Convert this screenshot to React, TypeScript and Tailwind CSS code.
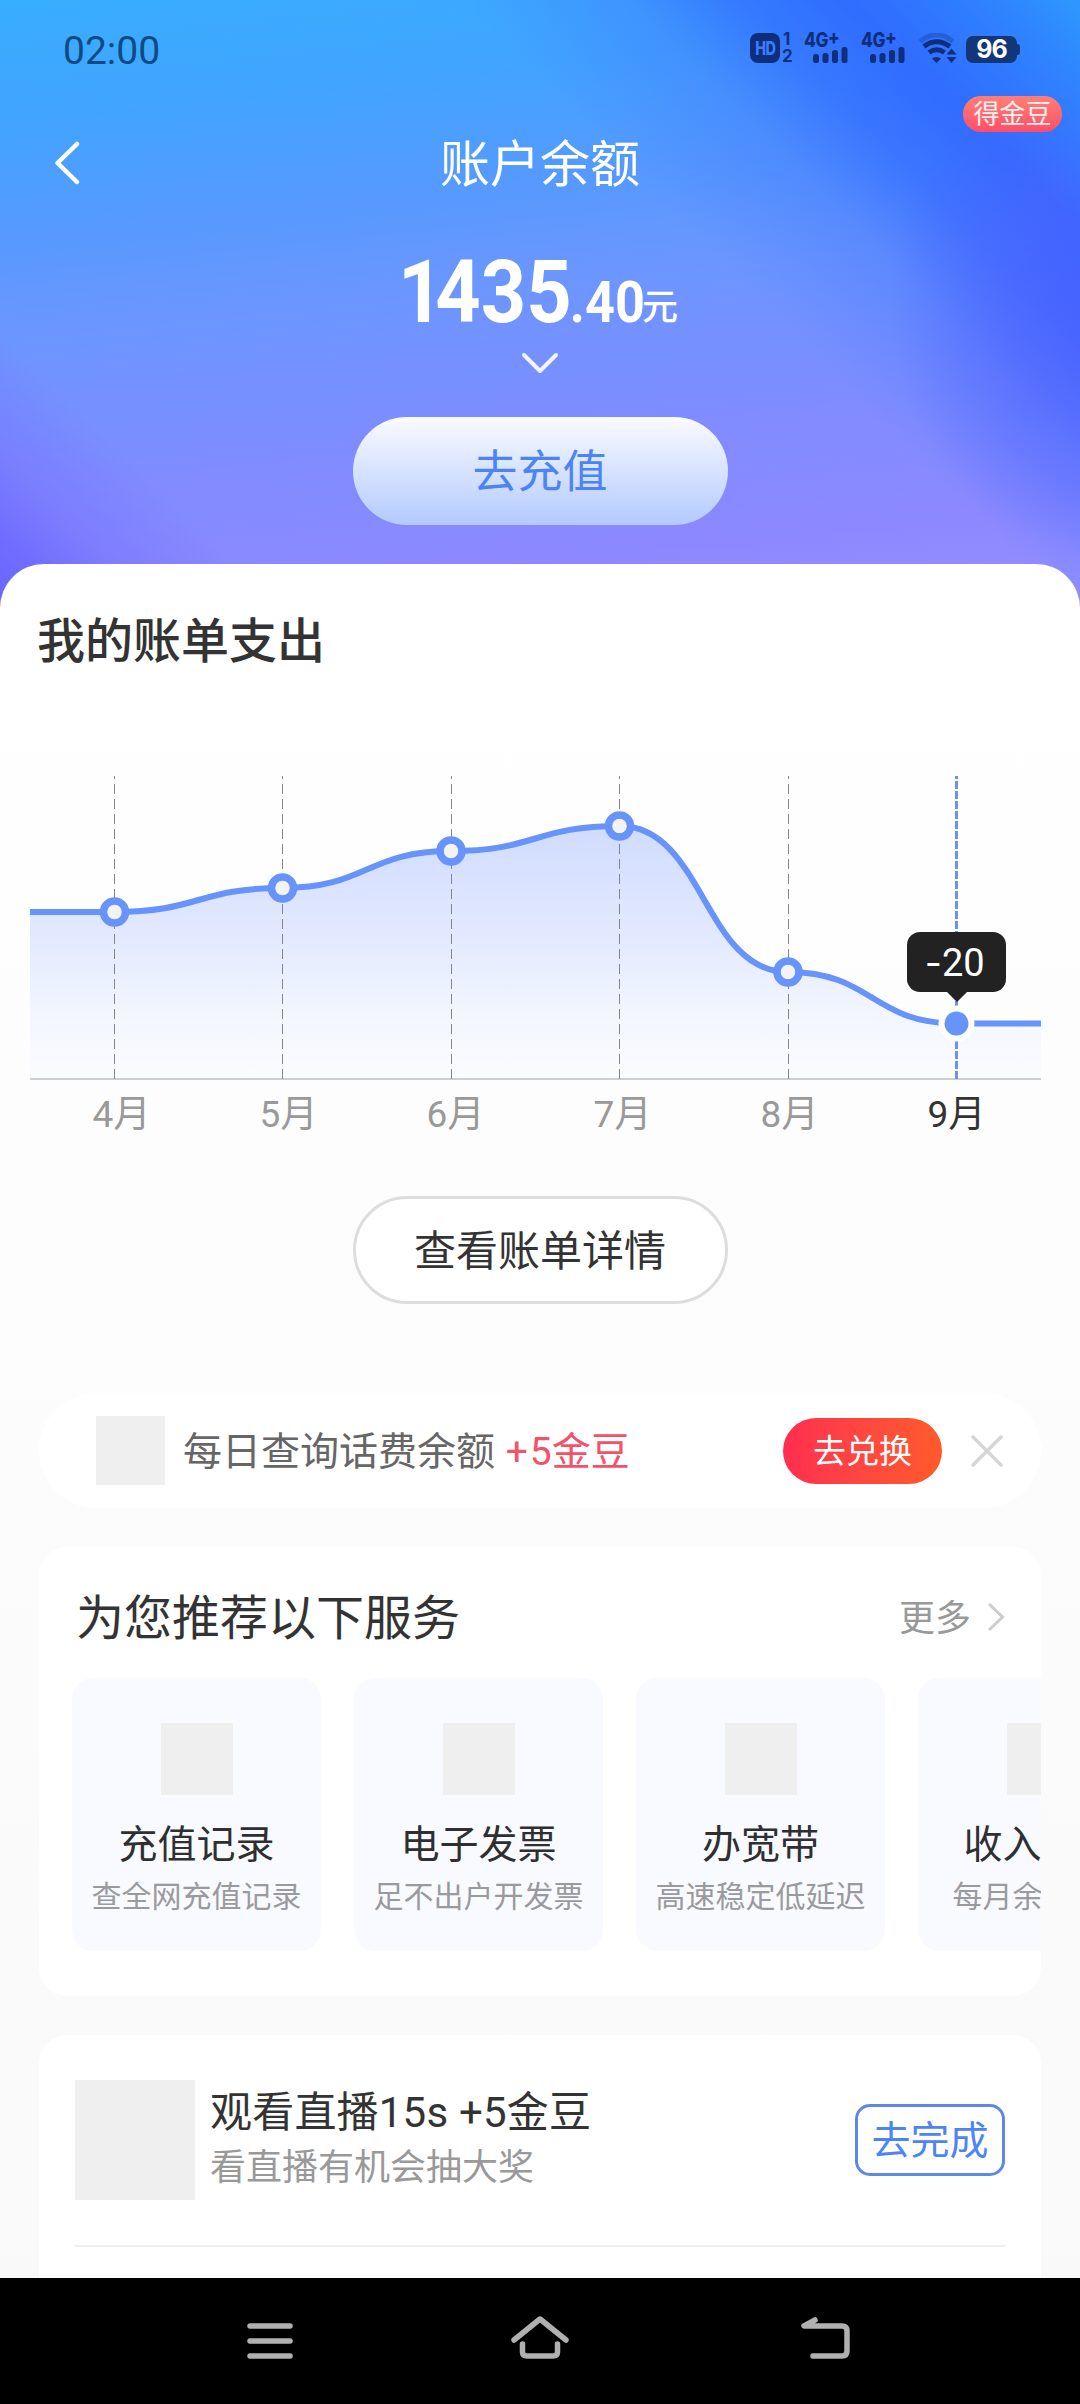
import React from 'react';

const FONT = "font-[Roboto,'Noto_Sans_CJK_SC',sans-serif]";

function Signal() {
  return (
    <div className="flex h-[30px] w-[45px] flex-col">
      <span className="h-[14px] origin-left scale-x-[0.86] font-[Inter,sans-serif] text-[20px] leading-[14px] font-extrabold tracking-[-0.5px]">
        4G<span className="relative -top-[3px]">+</span>
      </span>
      <svg width="45" height="16" viewBox="0 0 45 16" fill="currentColor">
        <rect x="9" y="7" width="6" height="9" rx="2.5" />
        <rect x="18.500" y="6" width="6" height="10" rx="2.5" />
        <rect x="28" y="3" width="6" height="13" rx="2.500" />
        <rect x="37.500" y="0" width="6" height="16" rx="2.500" />
      </svg>
    </div>
  );
}

function StatusBar() {
  return (
    <div className="flex h-[99px] justify-between pt-[28px] pr-[60px] pl-[63px]">
      <span className="h-[46px] font-[Roboto,sans-serif] text-[39px] leading-[46px] text-[#0f4a85]">02:00</span>
      <div className="flex h-[30px] pt-[5px] text-[#0f2f7d]">
        <div className="flex h-[30px] w-[30px] items-center justify-center rounded-[8px] bg-[#0f2f7d] font-[Inter,sans-serif] text-[16px] tracking-[-0.5px] text-[#3a7cff]">
          <span className="scale-x-[0.9] scale-y-[1.15] font-extrabold">HD</span>
        </div>
        <div className="ml-[2px] flex w-[22px] flex-col font-[Inter,sans-serif] text-[17px] font-bold">
          <span className="pl-[1px] leading-[13px]">1</span>
          <span className="mt-[4px] leading-[13px]">2</span>
        </div>
        <Signal />
        <div className="w-[12px]" />
        <Signal />
        <svg className="ml-[12px]" width="40" height="30" viewBox="0 0 40 30" fill="none" stroke="currentColor">
          <path d="M2 8.500Q18.500-5 35 8.500" strokeWidth="5" opacity=".3" />
          <path d="M6 13.500Q18.500 4 32 13.500" strokeWidth="5" />
          <path d="M11 19.500Q18.500 14 26.500 19.500" strokeWidth="5" />
          <path d="M14 25.500Q18.500 22.500 23 25.500L18.500 30Z" fill="currentColor" stroke="none" />
          <path d="M28.500 21.500H38.500L33.500 15.500ZM28.500 24H38.500L33.500 30Z" fill="currentColor" stroke="none" />
        </svg>
        <div className="mt-[3px] ml-[8px] flex h-[27px] items-center">
          <div className="flex h-[27px] w-[51px] items-center justify-center rounded-[7px] bg-[#133678] font-[Inter,sans-serif] text-[25px] leading-[27px] font-bold tracking-[-1px] text-white">
            96
          </div>
          <div className="h-[11px] w-[3px] rounded-r-[3px] bg-[#133678]" />
        </div>
      </div>
    </div>
  );
}

function Header() {
  return (
    <header className="h-[624px] bg-[linear-gradient(45deg,#6864ff_0px,#6c68ffe0_60px,#7673ff90_120px,#8080ff00_210px),linear-gradient(225deg,#2f98ff_0px,#2f90ffb0_60px,#2f80ff00_160px),radial-gradient(ellipse_230px_260px_at_1120px_300px,#4a5affb0_0%,#4e60ff80_50%,#5a68ff00_100%),linear-gradient(225deg,#2e68ff_0px,#2e68ffe8_170px,#3068ffb8_240px,#3f74ff60_320px,#5080ff00_440px),linear-gradient(174deg,#38adff_0%,#41a4ff_16%,#5699ff_32%,#6c96ff_46%,#7f8cff_66%,#8d88ff_84%,#938eff_94%)]">
      <StatusBar />
      <div className="relative flex h-[128px] items-center justify-center">
        <svg className="absolute top-[41px] left-[53px]" width="30" height="46" viewBox="0 0 30 46" fill="none" stroke="white" strokeWidth="4.500" strokeLinecap="round" strokeLinejoin="round">
          <path d="M24 4L4.500 23L24 42" />
        </svg>
        <h1 className="pt-[4px] text-[50px] leading-[60px] text-white">账户余额</h1>
        <span className="absolute top-[-3px] right-[18px] flex h-[36px] w-[99px] items-center justify-center rounded-full bg-linear-to-b from-[#ff7f76] to-[#ff4d68] text-[26px] leading-[36px] text-white/90">
          得金豆
        </span>
      </div>
      <div className="flex h-[120px] items-start pt-[13px] pl-[398px] text-white">
        <div className="mr-[-32px] flex h-[104px] w-[276px] origin-left scale-x-[0.9] items-baseline font-[Roboto,sans-serif] font-bold">
          <span className="text-[88px] leading-[104px]">
            <span className="tracking-[-9px]">1</span>435
          </span>
          <span className="-ml-[2px] text-[58px]">.40</span>
        </div>
        <span className="mt-[44px] h-[49px] text-[36px] leading-[49px] font-medium">元</span>
      </div>
      <svg className="mx-auto mt-[2px]" width="42" height="30" viewBox="0 0 42 30" fill="none" stroke="white" strokeOpacity=".9" strokeWidth="4" strokeLinecap="round" strokeLinejoin="round">
        <path d="M5 6L21 22L37 6" />
      </svg>
      <button className="mx-auto mt-[38px] flex h-[108px] w-[375px] items-center justify-center rounded-full bg-linear-to-b from-[#fafbff] to-[#b4caff] pt-[4px] text-[45px] text-[#4c84f5]">
        去充值
      </button>
    </header>
  );
}

const POINTS = [
  { month: '4月', x: 114.5, y: 912 },
  { month: '5月', x: 282.5, y: 888 },
  { month: '6月', x: 451, y: 851 },
  { month: '7月', x: 619.5, y: 826 },
  { month: '8月', x: 788, y: 972 },
  { month: '9月', x: 956.5, y: 1023.5 },
];

function curve() {
  let d = `M30 ${POINTS[0].y}H${POINTS[0].x}`;
  for (let i = 1; i < POINTS.length; i++) {
    const a = POINTS[i - 1];
    const b = POINTS[i];
    const m = (a.x + b.x) / 2;
    d += `C${m} ${a.y} ${m} ${b.y} ${b.x} ${b.y}`;
  }
  return d + 'H1041';
}

function Chart() {
  const d = curve();
  return (
    <div className="relative h-[394px]">
      <svg width="1080" height="320" viewBox="0 762 1080 320" fill="none">
        <defs>
          <linearGradient id="area" x1="0" y1="826" x2="0" y2="1079" gradientUnits="userSpaceOnUse">
            <stop offset="0" stopColor="#d0dbff" />
            <stop offset=".4" stopColor="#e1e8ff" />
            <stop offset=".75" stopColor="#f3f6ff" />
            <stop offset="1" stopColor="#fbfcff" />
          </linearGradient>
        </defs>
        <path d={`${d}V1079H30Z`} fill="url(#area)" />
        <path d="M30 1079H1041" stroke="#ccced3" strokeWidth="2" />
        {POINTS.slice(0, 5).map((p) => (
          <path key={p.month} d={`M${Math.floor(p.x) + 0.5} 1079V776`} stroke="#85858b" strokeWidth="1" strokeDasharray="10 5" />
        ))}
        <path d="M956.500 1079V776" stroke="#6a92ee" strokeWidth="3" strokeDasharray="8 2" />
        <path d={d} stroke="#6694fb" strokeWidth="6" />
        {POINTS.slice(0, 5).map((p) => (
          <circle key={p.month} cx={p.x} cy={p.y} r="11" fill="#f3f3f5" stroke="#6694fb" strokeWidth="7.500" />
        ))}
        <circle cx="956.500" cy="1023.500" r="18" fill="white" />
        <circle cx="956.500" cy="1023.500" r="12" fill="#6694fb" />
      </svg>
      <div className="absolute top-[170px] left-[907px] flex flex-col items-center">
        <div className="flex h-[60px] w-[99px] items-center justify-center rounded-[13px] bg-[#222] pt-[3px] text-[38px] text-white">
          <span className="mr-[3px] inline-block scale-x-[1.3]">-</span>20
        </div>
        <svg width="20" height="10" viewBox="0 0 20 10" fill="#222">
          <path d="M0 0H20L10 10Z" />
        </svg>
      </div>
      <div className="grid grid-cols-6 pt-[10px] pr-[40px] pl-[38px] text-center text-[37px] leading-[46px] text-[#999]">
        {POINTS.map((p, i) => (
          <span key={p.month} className={i === 5 ? 'text-[#333]' : ''}>
            {p.month}
          </span>
        ))}
      </div>
    </div>
  );
}

const SERVICES = [
  { title: '充值记录', sub: '查全网充值记录' },
  { title: '电子发票', sub: '足不出户开发票' },
  { title: '办宽带', sub: '高速稳定低延迟' },
];

function Services() {
  return (
    <section className="mx-[39px] mt-[39px] h-[449px] overflow-hidden rounded-[28px] bg-white">
      <div className="flex h-[131px] items-center justify-between pt-[12px] pr-[36px] pl-[37px]">
        <h2 className="text-[48px] leading-[60px] text-[#333]">为您推荐以下服务</h2>
        <div className="flex items-center text-[36px] leading-[44px] text-[#999]">
          更多
          <svg className="mb-[4px] ml-[16px]" width="18" height="30" viewBox="0 0 18 30" fill="none" stroke="#ccc" strokeWidth="3">
            <path d="M2 2L15.500 15L2 28" />
          </svg>
        </div>
      </div>
      <div className="flex gap-[33px] pl-[33px]">
        {SERVICES.map((s) => (
          <div key={s.title} className="flex h-[273px] w-[249px] shrink-0 flex-col items-center rounded-[21px] bg-[#f9faff] pt-[45px]">
            <div className="h-[72px] w-[72px] bg-[#efefef]" />
            <span className="mt-[25px] text-[39px] leading-[50px] text-[#2f2f31]">{s.title}</span>
            <span className="mt-[7px] text-[30px] leading-[40px] text-[#9a9a9d]">{s.sub}</span>
          </div>
        ))}
        <div className="flex h-[273px] w-[249px] shrink-0 flex-col items-center rounded-[21px] bg-[#f9faff] pt-[45px]">
          <div className="h-[72px] w-[72px] bg-[#efefef]" />
          <span className="mt-[25px] w-[158px] text-[39px] leading-[50px] text-[#2f2f31]">收入</span>
          <span className="mt-[7px] w-[180px] text-[30px] leading-[40px] text-[#9a9a9d]">每月余</span>
        </div>
      </div>
    </section>
  );
}

function NavBar() {
  return (
    <nav className="flex h-[126px] shrink-0 bg-black text-[#b0b0b0]">
      <svg width="1080" height="126" viewBox="0 2278 1080 126" fill="none" stroke="currentColor" strokeWidth="5.500" strokeLinecap="round" strokeLinejoin="round">
        <path d="M250 2326H290M250 2341H290M250 2356H290" />
        <path d="M514 2340L540 2319L566 2340" />
        <path d="M522.500 2344V2352Q522.500 2356 527 2356H553Q557.500 2356 557.500 2352V2344" />
        <path d="M815 2320L804 2326H842Q847 2326 847 2331V2351Q847 2356 842 2356H813" />
      </svg>
    </nav>
  );
}

export default function App() {
  return (
    <div className={`flex h-[2404px] w-[1080px] flex-col overflow-hidden bg-white ${FONT}`}>
      <Header />
      <main className="relative -mt-[60px] flex h-[1714px] shrink-0 flex-col overflow-hidden rounded-t-[44px] bg-linear-to-b from-white via-[#fcfcfc] to-[#f9f9f9]">
        <h2 className="mt-[48px] ml-[37px] h-[60px] text-[48px] leading-[60px] font-medium text-[#333]">我的账单支出</h2>
        <div className="mt-[90px]">
          <Chart />
        </div>
        <button className="mx-auto mt-[40px] flex h-[108px] w-[375px] shrink-0 items-center justify-center rounded-full border-[3px] border-[#ddd] bg-white pt-[3px] text-[42px] text-[#333]">
          查看账单详情
        </button>
        <section className="mx-[39px] mt-[89px] flex h-[115px] shrink-0 items-center rounded-full bg-white pl-[57px]">
          <div className="h-[69px] w-[69px] bg-[#efefef]" />
          <p className="ml-[18px] w-[600px] pt-[3px] text-[39px] leading-[50px] text-[#666]">
            每日查询话费余额 <span className="ml-[1px] text-[#f4516a]">+<span className="ml-[2px]">5金豆</span></span>
          </p>
          <button className="flex h-[66px] w-[159px] items-center justify-center rounded-full bg-linear-to-r from-[#ff2d4f] to-[#ff5a2a] pt-[3px] text-[33px] text-white">
            去兑换
          </button>
          <svg className="ml-[29px]" width="32" height="32" viewBox="0 0 32 32" stroke="#d6d6d6" strokeWidth="3.500" strokeLinecap="round">
            <path d="M2 2L30 30M30 2L2 30" />
          </svg>
        </section>
        <div className="shrink-0">
          <Services />
        </div>
        <section className="mx-[39px] mt-[39px] h-[260px] shrink-0 rounded-t-[28px] bg-white px-[36px] pt-[45px]">
          <div className="flex h-[167px] items-start border-b-2 border-[#eee]">
            <div className="h-[120px] w-[120px] bg-[#efefef]" />
            <div className="ml-[15px] flex-1">
              <h3 className="mt-[6px] text-[42px] leading-[54px] tracking-[0.2px] text-[#333]">观看直播15s +5金豆</h3>
              <p className="mt-[5px] text-[36px] leading-[46px] text-[#999]">看直播有机会抽大奖</p>
            </div>
            <button className="mt-[24px] flex h-[72px] w-[150px] items-center justify-center rounded-[15px] border-[3px] border-[#5d88e8] pt-[3px] text-[39px] text-[#4c84f5]">
              去完成
            </button>
          </div>
        </section>
      </main>
      <NavBar />
    </div>
  );
}
